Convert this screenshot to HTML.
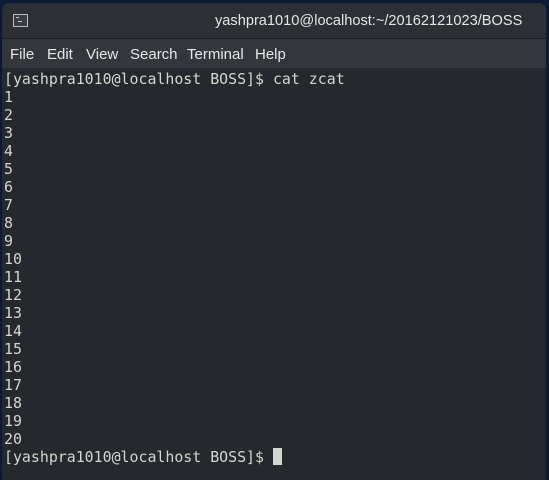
<!DOCTYPE html>
<html><head><style>
body{margin:0;width:549px;height:480px;background:#0d1a33;overflow:hidden;position:relative;font-family:"Liberation Sans",sans-serif}
#win{position:absolute;left:2px;top:3px;width:544px;height:477px;background:#25282c;border-radius:7px 7px 0 0;overflow:hidden}
#title{height:35px;background:#2c2f33;color:#e6e6e6;font-size:14.6px;position:relative;border-bottom:1px solid #1e2023}
#title span{position:absolute;left:213px;top:10px}
#ico{position:absolute;left:11px;top:11px;width:13px;height:11px;border:1px solid #bbb;background:#3a3d41}
#ico:before{content:"";position:absolute;left:2px;top:2px;width:3px;height:2px;border-top:1px solid #ccc;}
#ico:after{content:"";position:absolute;left:4px;top:6px;width:4px;height:1px;background:#ccc}
#menu{height:29px;background:#33363b;color:#e8e8e8;font-size:15px;position:relative}
#menu span{position:absolute;top:7px}
#term{font-family:"DejaVu Sans Mono","Liberation Mono",monospace;font-size:14.9px;line-height:18px;color:#d3d7cf;padding:2px 0 0 2px;white-space:pre}
.cur{display:inline-block;width:9px;height:17px;background:#d3d7cf;vertical-align:-3px}
</style></head><body>
<div id="win">
<div id="title"><div id="ico"></div><span>yashpra1010@localhost:~/20162121023/BOSS</span></div>
<div id="menu"><span style="left:8px">File</span><span style="left:45px">Edit</span><span style="left:84px">View</span><span style="left:128px">Search</span><span style="left:185px">Terminal</span><span style="left:253px">Help</span></div>
<div id="term">[yashpra1010@localhost BOSS]$ cat zcat
1
2
3
4
5
6
7
8
9
10
11
12
13
14
15
16
17
18
19
20
[yashpra1010@localhost BOSS]$ <span class="cur"></span></div>
</div>
</body></html>
